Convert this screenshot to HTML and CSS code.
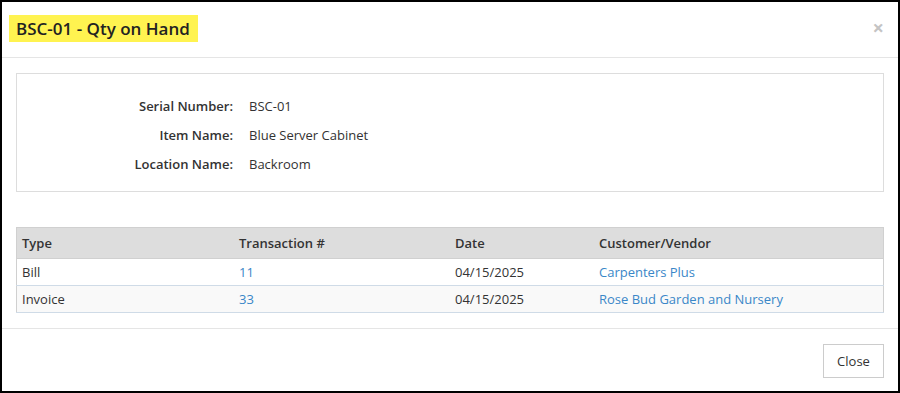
FILE: index.html
```html
<!DOCTYPE html>
<html lang="en">
<head>
<meta charset="UTF-8">
<title>BSC-01 - Qty on Hand</title>
<link rel="stylesheet" href="styles.css">
</head>
<body>

<div class="modal">
    <div class="modal-header">
        <h4 class="modal-title">BSC-01 - Qty on Hand</h4>
        <span class="close">&times;</span>
    </div>

    <div class="modal-body">
        <div class="info-panel">
            <div class="info-row">
                <div class="info-label">Serial Number:</div>
                <div class="info-value">BSC-01</div>
            </div>
            <div class="info-row">
                <div class="info-label">Item Name:</div>
                <div class="info-value">Blue Server Cabinet</div>
            </div>
            <div class="info-row">
                <div class="info-label">Location Name:</div>
                <div class="info-value">Backroom</div>
            </div>
        </div>

        <table class="grid">
            <thead>
                <tr>
                    <th class="col-type">Type</th>
                    <th class="col-trans">Transaction #</th>
                    <th class="col-date">Date</th>
                    <th>Customer/Vendor</th>
                </tr>
            </thead>
            <tbody>
                <tr>
                    <td>Bill</td>
                    <td><a href="#">11</a></td>
                    <td>04/15/2025</td>
                    <td><a href="#">Carpenters Plus</a></td>
                </tr>
                <tr class="alt">
                    <td>Invoice</td>
                    <td><a href="#">33</a></td>
                    <td>04/15/2025</td>
                    <td><a href="#">Rose Bud Garden and Nursery</a></td>
                </tr>
            </tbody>
        </table>
    </div>

    <div class="modal-footer">
        <button class="btn">Close</button>
    </div>
</div>

</body>
</html>
```

FILE: styles.css
```css
html, body {
    height: 100%;
    margin: 0;
    padding: 0;
}
body {
    font-family: "Open Sans", Arial, sans-serif;
    font-size: 13px;
    color: #333333;
    background: #000000;
}
.modal {
    margin: 2px;
    height: 389px;
    background: #ffffff;
    display: flex;
    flex-direction: column;
}
.modal-header {
    box-sizing: border-box;
    display: flex;
    align-items: flex-start;
    justify-content: space-between;
    padding: 13px 14px 0 7px;
    height: 56px;
    border-bottom: 1px solid #e5e5e5;
}
.modal-title {
    margin: 0;
    font-size: 17px;
    font-weight: 600;
    line-height: 27px;
    padding: 0 8px 0 7px;
    background: #fff350;
    color: #222222;
}
.close {
    font-size: 20px;
    font-weight: bold;
    color: #c4c4c4;
    line-height: 1;
    margin-top: 3px;
    cursor: pointer;
}
.modal-body {
    padding: 15px 14px 14px 14px;
    flex: 1;
}
.info-panel {
    border: 1px solid #dddddd;
    padding: 17px 0 13px 0;
    margin-bottom: 35px;
}
.info-row {
    display: flex;
    height: 29px;
    align-items: center;
}
.info-label {
    width: 231px;
    text-align: right;
    font-weight: 600;
    padding-right: 15px;
    box-sizing: border-box;
}
.info-value {
    padding-left: 1px;
}
.grid {
    width: 100%;
    border-collapse: collapse;
    border: 1px solid #d0d0d0;
}
.grid th {
    background: #dddddd;
    text-align: left;
    font-weight: 600;
    height: 30px;
    padding: 0 5px;
    border-bottom: 1px solid #d0d0d0;
}
.grid td {
    height: 26px;
    padding: 0 5px;
    border-bottom: 1px solid #cfdbe7;
}
.grid tr.alt td {
    background: #f9f9f9;
}
.col-type {
    width: 207px;
}
.col-trans {
    width: 206px;
}
.col-date {
    width: 134px;
}
.grid a {
    color: #3a87c8;
    text-decoration: none;
}
.modal-footer {
    border-top: 1px solid #e5e5e5;
    display: flex;
    justify-content: flex-end;
    padding: 15px 14px 13px 0;
}
.btn {
    font-family: "Open Sans", Arial, sans-serif;
    font-size: 13px;
    color: #333333;
    background: #ffffff;
    border: 1px solid #cccccc;
    width: 61px;
    height: 34px;
    cursor: pointer;
}
```
